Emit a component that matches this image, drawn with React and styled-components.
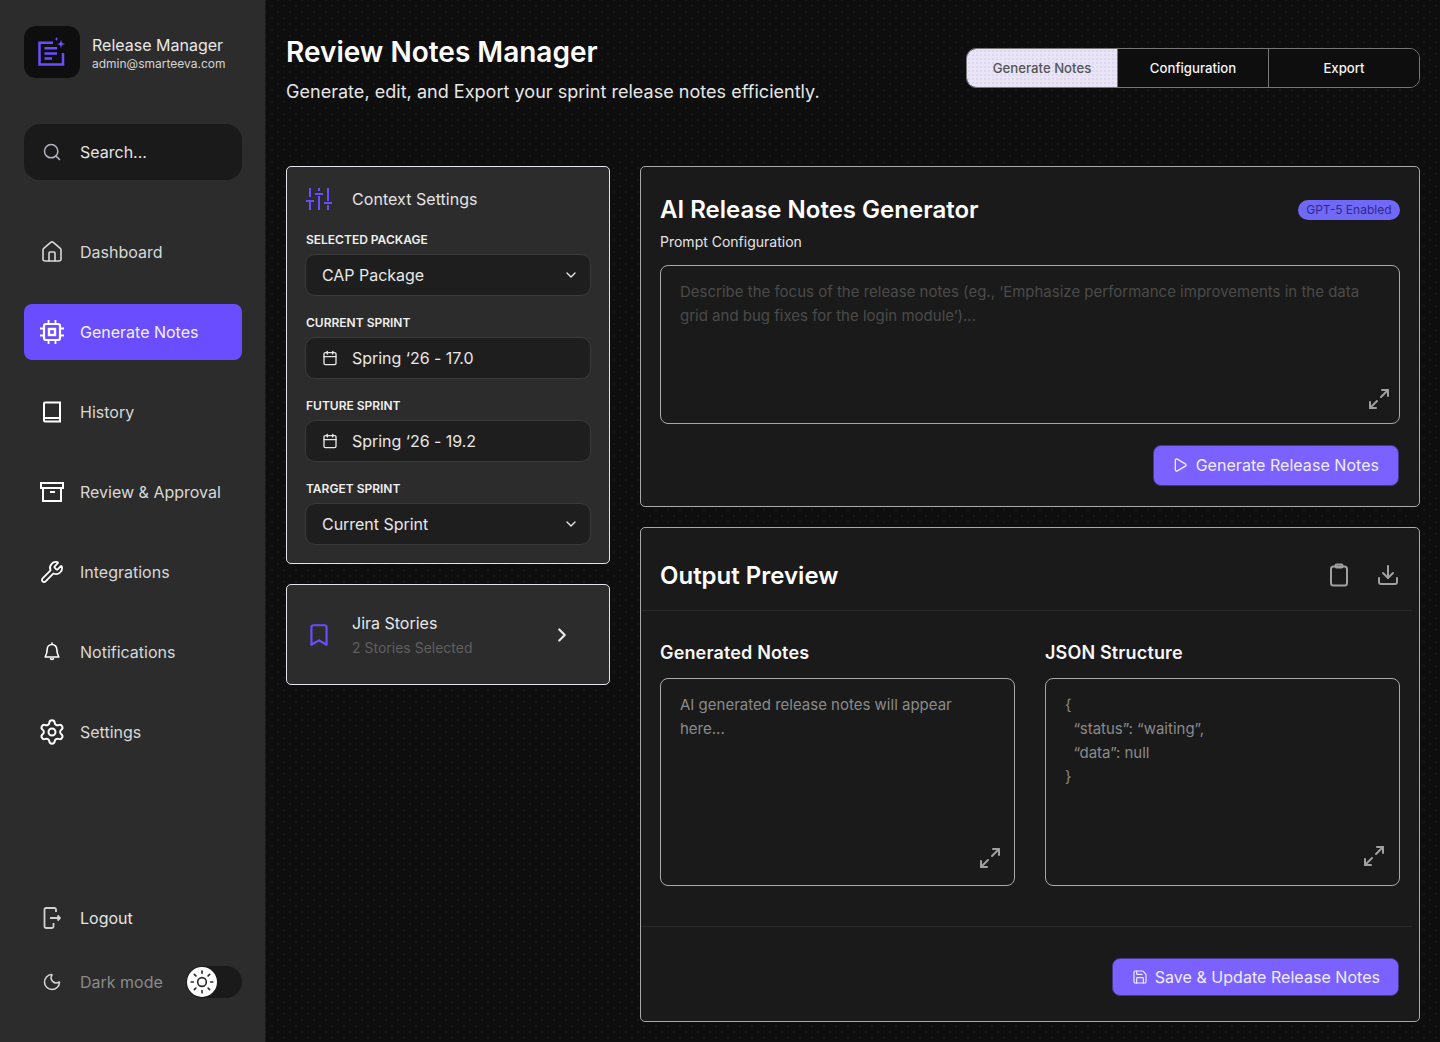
import React from 'react';
import styled, { createGlobalStyle } from 'styled-components';
import {
  Home, Wrench, Settings, Moon, Sun, Search, Calendar, ChevronDown,
  ChevronRight, Bookmark, Maximize2, Download, Save, Play,
} from 'lucide-react';

const GlobalStyle = createGlobalStyle`
  html, body { margin: 0; padding: 0; background: #0e0e0e; }
  * { box-sizing: border-box; }
  body { font-family: Inter, "Noto Sans", sans-serif; color: #fff; }
`;

const Page = styled.div`
  width: 1440px;
  height: 1042px;
  display: flex;
  overflow: hidden;
`;

const Sidebar = styled.aside`
  width: 266px;
  flex: none;
  background: #2c2c2c;
  border-right: 1px solid #1a1a1a;
  padding: 26px 23px 48px 24px;
  display: flex;
  flex-direction: column;
`;

const Brand = styled.div`
  display: flex;
  align-items: center;
  gap: 12px;
`;

const LogoBox = styled.div`
  width: 56px;
  height: 52px;
  border-radius: 12px;
  background: #0e0e0e;
  display: flex;
  align-items: center;
  justify-content: center;
`;

const BrandName = styled.div`
  font-size: 16px;
  line-height: 20px;
  color: #e8e8e8;
  margin-top: 2px;
`;

const BrandMail = styled.div`
  font-size: 12px;
  line-height: 16px;
  margin-top: 1px;
  color: #d4d4d4;
`;

const SearchBox = styled.div`
  margin-top: 46px;
  height: 56px;
  border-radius: 16px;
  background: #1a1a1a;
  display: flex;
  align-items: center;
  gap: 18px;
  padding: 0 18px;
  font-size: 16px;
  color: #e4e4e4;
  svg { color: #b4b4c4; }
`;

const Nav = styled.nav`
  margin-top: 44px;
  display: flex;
  flex-direction: column;
  gap: 24px;
`;

const NavItem = styled.div`
  height: 56px;
  border-radius: 8px;
  background: ${(p) => (p.$active ? '#6a4dff' : 'transparent')};
  color: ${(p) => (p.$active ? '#f2f0ff' : '#d8d8d8')};
  display: flex;
  align-items: center;
  gap: 16px;
  padding: 0 16px;
  font-size: 16px;
  svg { color: #fff; flex: none; }
`;

const SideBottom = styled.div`
  margin-top: auto;
  display: flex;
  flex-direction: column;
  gap: 40px;
`;

const BottomRow = styled.div`
  height: 24px;
  display: flex;
  align-items: center;
  gap: 16px;
  padding-left: 16px;
  font-size: 16px;
  color: ${(p) => (p.$dim ? '#8a8a8a' : '#e4e4e4')};
  svg { flex: none; }
`;

const Toggle = styled.div`
  margin-left: auto;
  width: 56px;
  height: 32px;
  border-radius: 16px;
  background: #1a1a1a;
  padding: 1px;
`;

const Knob = styled.div`
  width: 30px;
  height: 30px;
  border-radius: 50%;
  background: #fff;
  color: #2c2c2c;
  display: flex;
  align-items: center;
  justify-content: center;
`;

const Main = styled.main`
  flex: 1;
  background-color: #0e0e0e;
  background-image:
    radial-gradient(rgba(255,255,255,.05) 0.6px, transparent 0.9px),
    radial-gradient(rgba(255,255,255,.05) 0.6px, transparent 0.9px);
  background-size: 12px 12px;
  background-position: 0 0, 6px 6px;
  padding: 36px 20px 20px 20px;
`;

const Header = styled.header`
  display: flex;
  justify-content: space-between;
  align-items: flex-start;
  height: 130px;
`;

const PageTitle = styled.h1`
  margin: 0;
  font-size: 28px;
  line-height: 32px;
  font-weight: 600;
  color: #fff;
`;

const PageSub = styled.p`
  margin: 12px 0 0;
  font-size: 18px;
  line-height: 24px;
  letter-spacing: 0.03px;
  color: #e6e6e6;
`;

const Tabs = styled.div`
  margin-top: 12px;
  width: 454px;
  height: 40px;
  display: flex;
  border: 1px solid #777;
  border-radius: 10px;
  overflow: hidden;
`;

const Tab = styled.div`
  flex: 1;
  display: flex;
  align-items: center;
  justify-content: center;
  padding-bottom: 1px;
  font-size: 13.2px;
  font-weight: 500;
  color: ${(p) => (p.$active ? '#555' : '#f4f4f4')};
  background-color: ${(p) => (p.$active ? '#eae4f8' : '#0e0e0e')};
  background-image: ${(p) => (p.$active ? 'radial-gradient(rgba(0,0,0,.12) 0.6px, transparent 0.8px)' : 'none')};
  background-size: 4px 4px;
  & + & { border-left: 1px solid #777; }
`;

const Columns = styled.div`
  display: grid;
  grid-template-columns: 324px 780px;
  gap: 30px;
  align-items: start;
`;

const Stack = styled.div`
  display: flex;
  flex-direction: column;
  gap: 20px;
`;

const SideCard = styled.section`
  background: #2c2c2c;
  border: 1px solid #e4e4ee;
  border-radius: 5px;
  padding: 20px 18px 18px;
`;

const CardHead = styled.div`
  height: 24px;
  display: flex;
  align-items: center;
  gap: 20px;
  padding-left: 1px;
  font-size: 16px;
  letter-spacing: 0.05px;
  color: #e4e4e4;
  margin-bottom: 21px;
`;

const Field = styled.div`
  & + & { margin-top: 19px; }
`;

const FieldLabel = styled.div`
  padding-left: 1px;
  font-size: 12px;
  line-height: 16px;
  font-weight: 600;
  color: #f0f0f0;
  margin-bottom: 6px;
`;

const Control = styled.div`
  height: 42px;
  border-radius: 10px;
  background: #1e1e1e;
  border: 1px solid #3a3a3a;
  display: flex;
  align-items: center;
  gap: 14px;
  padding: 0 11px 0 16px;
  font-size: 16px;
  letter-spacing: -0.03px;
  color: #e8e8e8;
  svg { flex: none; }
`;

const Caret = styled.span`
  margin-left: auto;
  display: flex;
`;

const JiraCard = styled(SideCard)`
  height: 101px;
  padding: 0 36px 0 19px;
  display: flex;
  align-items: center;
  gap: 20px;
`;

const JiraText = styled.div`
  flex: 1;
  padding-bottom: 2px;
`;

const JiraTitle = styled.div`
  font-size: 16px;
  line-height: 24px;
  color: #e8e8e8;
`;

const JiraSub = styled.div`
  margin-top: 4px;
  font-size: 14px;
  line-height: 18px;
  color: #5f5f5f;
`;

const Card = styled.section`
  background: #1a1a1a;
  border: 1px solid #a8a8a8;
  border-radius: 5px;
`;

const GeneratorCard = styled(Card)`
  height: 341px;
  padding: 27px 19px 0;
`;

const TitleRow = styled.div`
  height: 32px;
  display: flex;
  align-items: center;
  justify-content: space-between;
`;

const CardTitle = styled.h2`
  margin: 0;
  font-size: 24px;
  line-height: 32px;
  font-weight: 600;
  color: #fff;
`;

const Badge = styled.span`
  height: 20px;
  padding: 0 8.5px;
  border-radius: 10px;
  font-size: 12px;
  line-height: 20px;
  color: #2e2a8c;
  background-color: #7069f6;
`;

const PromptLabel = styled.div`
  margin-top: 6px;
  font-size: 14px;
  line-height: 20px;
  color: #e4e4e4;
`;

const TextBox = styled.div`
  position: relative;
  height: ${(p) => p.$h}px;
  margin-top: ${(p) => p.$mt || 0}px;
  border: 1px solid #a8a8a8;
  border-radius: 8px;
  padding: 14px 19px;
  font-size: 15px;
  line-height: 24px;
  color: ${(p) => p.$color || '#8a8a8a'};
  white-space: pre-wrap;
`;

const ExpandIcon = styled.span`
  position: absolute;
  right: ${(p) => p.$r}px;
  bottom: ${(p) => p.$b}px;
  display: flex;
  color: #a0a0a0;
`;

const Actions = styled.div`
  display: flex;
  justify-content: flex-end;
  padding-right: 1px;
`;

const PrimaryButton = styled.div`
  height: ${(p) => p.$h}px;
  margin-top: ${(p) => p.$mt}px;
  padding: 0 ${(p) => p.$pr}px 1px ${(p) => p.$pl}px;
  border-radius: 8px;
  background: #7b61ff;
  border: 1px solid #453a8a;
  display: flex;
  align-items: center;
  gap: ${(p) => p.$gap}px;
  font-size: 16px;
  letter-spacing: 0.04px;
  color: #f0ecff;
  svg { flex: none; }
`;

const OutputCard = styled(Card)`
  height: 495px;
`;

const OutputHead = styled.div`
  height: 83px;
  margin-right: 7px;
  padding: 14px 12px 0 19px;
  border-bottom: 1px solid #2a2a2a;
  display: flex;
  align-items: center;
  justify-content: space-between;
`;

const IconRow = styled.div`
  display: flex;
  gap: 25px;
  margin-top: -2px;
  color: #a0a0a0;
`;

const OutputGrid = styled.div`
  display: grid;
  grid-template-columns: 355px 355px;
  gap: 30px;
  padding: 29px 19px 0;
`;

const ColTitle = styled.h3`
  margin: 0 0 12px;
  font-size: 18px;
  line-height: 26px;
  letter-spacing: 0.15px;
  font-weight: 600;
  color: #f6f6f6;
`;

const OutputFoot = styled.div`
  margin-top: 40px;
  margin-right: 7px;
  padding-right: 13px;
  height: 95px;
  border-top: 1px solid #2a2a2a;
  display: flex;
  justify-content: flex-end;
  align-items: flex-start;
`;

const LogoIcon = () => (
  <svg width="30" height="30" viewBox="0 0 30 30" fill="none" stroke="#6a4dff" strokeWidth="2.5">
    <path d="M16 5.800H2.500V27.500H26V16" />
    <path d="M7.500 11.300H20M7.500 16.500H20M7.500 21.500H15" />
    <path d="M24 3l1.100 2.900L28 7l-2.900 1.100L24 11l-1.100-2.900L20 7l2.900-1.100z" fill="#6a4dff" stroke="none" />
    <path d="M19.500 0l.6 1.400 1.400.6-1.400.6-.6 1.400-.6-1.400-1.400-.6 1.400-.6z" fill="#6a4dff" stroke="none" />
  </svg>
);

const CpuIcon = () => (
  <svg width="24" height="24" viewBox="0 0 24 24" fill="none" stroke="#fff" strokeWidth="2.200">
    <rect x="4" y="4" width="16" height="16" rx="2" />
    <rect x="9" y="9" width="6" height="6" strokeWidth="2.400" />
    <path d="M8.500 0v3M15.500 0v3M8.500 21v3M15.500 21v3M0 8.500h3M0 15.500h3M21 8.500h3M21 15.500h3" strokeWidth="1.800" />
  </svg>
);

const BookIcon = () => (
  <svg width="24" height="24" viewBox="0 0 24 24" fill="none" stroke="#fff" strokeWidth="2">
    <path d="M4 3.500a1 1 0 0 1 1-1h15v19H5a1 1 0 0 1-1-1zM4 18h16" />
  </svg>
);

const ArchiveIcon = () => (
  <svg width="24" height="24" viewBox="0 0 24 24" fill="none" stroke="#fff" strokeWidth="2">
    <path d="M1 3h22v5H1zM3 8v13h18V8M10 12h5" />
  </svg>
);

const BellIcon = () => (
  <svg width="24" height="24" viewBox="0 0 24 24" fill="none" stroke="#fff" strokeWidth="1.600" strokeLinejoin="round">
    <path d="M12 2.500v2M12 4.500a4.800 4.800 0 0 1 4.800 4.800c0 3.800 1 5.700 2 7.700H5.200c1-2 2-3.900 2-7.700A4.800 4.800 0 0 1 12 4.500z" />
    <path d="M10.500 18a1.500 1.500 0 0 0 3 0" />
  </svg>
);

const LogoutIcon = () => (
  <svg width="24" height="24" viewBox="0 0 24 24" fill="none" stroke="#d0d0d0" strokeWidth="1.800" strokeLinejoin="round">
    <path d="M16 6V3.500A1.500 1.500 0 0 0 14.500 2H6a1.500 1.500 0 0 0-1.500 1.500v17A1.500 1.500 0 0 0 6 22h6a1.500 1.500 0 0 0 1.500-1.500V17" />
    <path d="M10 12h10M17.500 9.500L20 12l-2.500 2.500" />
  </svg>
);

const SlidersIcon = () => (
  <svg width="26" height="24" viewBox="0 0 26 24" fill="none" stroke="#6a4dff" strokeWidth="2">
    <path d="M4 1v9M4 15v8M13 1v3M13 9v14M22 1v13M22 18v5" />
    <path d="M0 14h8M9 7h8M18 16h8" />
  </svg>
);

const ClipboardIcon = () => (
  <svg width="24" height="24" viewBox="0 0 24 24" fill="none" stroke="currentColor" strokeWidth="2">
    <rect x="4" y="3.500" width="16" height="19" rx="2.500" />
    <rect x="8.500" y="1.500" width="7" height="3" rx="1" />
  </svg>
);

const navItems = [
  { label: 'Dashboard', icon: <Home size={24} strokeWidth={1.6} color="#d8d8d8" /> },
  { label: 'Generate Notes', icon: <CpuIcon />, active: true },
  { label: 'History', icon: <BookIcon /> },
  { label: 'Review & Approval', icon: <ArchiveIcon /> },
  { label: 'Integrations', icon: <Wrench size={24} strokeWidth={1.8} /> },
  { label: 'Notifications', icon: <BellIcon /> },
  { label: 'Settings', icon: <Settings size={28} strokeWidth={1.7} style={{ margin: '0 -2px' }} /> },
];

const App = () => (
  <Page>
    <GlobalStyle />
    <Sidebar>
      <Brand>
        <LogoBox><LogoIcon /></LogoBox>
        <div>
          <BrandName>Release Manager</BrandName>
          <BrandMail>admin@smarteeva.com</BrandMail>
        </div>
      </Brand>
      <SearchBox>
        <Search size={20} strokeWidth={1.8} />
        Search...
      </SearchBox>
      <Nav>
        {navItems.map((item) => (
          <NavItem key={item.label} $active={item.active}>
            {item.icon}
            {item.label}
          </NavItem>
        ))}
      </Nav>
      <SideBottom>
        <BottomRow><LogoutIcon />Logout</BottomRow>
        <BottomRow $dim>
          <Moon size={20} strokeWidth={1.8} color="#d8d8d8" style={{ margin: '0 2px' }} />
          Dark mode
          <Toggle><Knob><Sun size={26} strokeWidth={1.5} /></Knob></Toggle>
        </BottomRow>
      </SideBottom>
    </Sidebar>
    <Main>
      <Header>
        <div>
          <PageTitle>Review Notes Manager</PageTitle>
          <PageSub>Generate, edit, and Export your sprint release notes efficiently.</PageSub>
        </div>
        <Tabs>
          <Tab $active>Generate Notes</Tab>
          <Tab>Configuration</Tab>
          <Tab>Export</Tab>
        </Tabs>
      </Header>
      <Columns>
        <Stack>
          <SideCard>
            <CardHead><SlidersIcon />Context Settings</CardHead>
            <Field>
              <FieldLabel>SELECTED PACKAGE</FieldLabel>
              <Control>CAP Package<Caret><ChevronDown size={16} strokeWidth={2} /></Caret></Control>
            </Field>
            <Field>
              <FieldLabel>CURRENT SPRINT</FieldLabel>
              <Control><Calendar size={16} strokeWidth={2} />Spring ‘26 - 17.0</Control>
            </Field>
            <Field>
              <FieldLabel>FUTURE SPRINT</FieldLabel>
              <Control><Calendar size={16} strokeWidth={2} />Spring ‘26 - 19.2</Control>
            </Field>
            <Field>
              <FieldLabel>TARGET SPRINT</FieldLabel>
              <Control>Current Sprint<Caret><ChevronDown size={16} strokeWidth={2} /></Caret></Control>
            </Field>
          </SideCard>
          <JiraCard>
            <Bookmark size={26} strokeWidth={2} color="#6a4dff" />
            <JiraText>
              <JiraTitle>Jira Stories</JiraTitle>
              <JiraSub>2 Stories Selected</JiraSub>
            </JiraText>
            <ChevronRight size={22} strokeWidth={2.4} color="#e8e8e8" />
          </JiraCard>
        </Stack>
        <Stack>
          <GeneratorCard>
            <TitleRow>
              <CardTitle>AI Release Notes Generator</CardTitle>
              <Badge>GPT-5 Enabled</Badge>
            </TitleRow>
            <PromptLabel>Prompt Configuration</PromptLabel>
            <TextBox $h={159} $mt={13} $color="#4a4a4a">
              Describe the focus of the release notes (eg., ‘Emphasize performance improvements in the data grid and bug fixes for the login module’)...
              <ExpandIcon $r={8} $b={12}><Maximize2 size={24} strokeWidth={2} /></ExpandIcon>
            </TextBox>
            <Actions>
              <PrimaryButton $h={41} $mt={21} $pl={18} $pr={19} $gap={8}>
                <Play size={16} strokeWidth={2} />
                Generate Release Notes
              </PrimaryButton>
            </Actions>
          </GeneratorCard>
          <OutputCard>
            <OutputHead>
              <CardTitle>Output Preview</CardTitle>
              <IconRow><ClipboardIcon /><Download size={24} strokeWidth={2} /></IconRow>
            </OutputHead>
            <OutputGrid>
              <div>
                <ColTitle>Generated Notes</ColTitle>
                <TextBox $h={208}>
                  AI generated release notes will appear here...
                  <ExpandIcon $r={12} $b={15}><Maximize2 size={24} strokeWidth={2} /></ExpandIcon>
                </TextBox>
              </div>
              <div>
                <ColTitle>JSON Structure</ColTitle>
                <TextBox $h={208}>
                  {'{\n  “status”: “waiting”,\n  “data”: null\n}'}
                  <ExpandIcon $r={13} $b={17}><Maximize2 size={24} strokeWidth={2} /></ExpandIcon>
                </TextBox>
              </div>
            </OutputGrid>
            <OutputFoot>
              <PrimaryButton $h={38} $mt={31} $pl={19} $pr={18} $gap={7}>
                <Save size={16} strokeWidth={1.8} />
                Save & Update Release Notes
              </PrimaryButton>
            </OutputFoot>
          </OutputCard>
        </Stack>
      </Columns>
    </Main>
  </Page>
);

export default App;
